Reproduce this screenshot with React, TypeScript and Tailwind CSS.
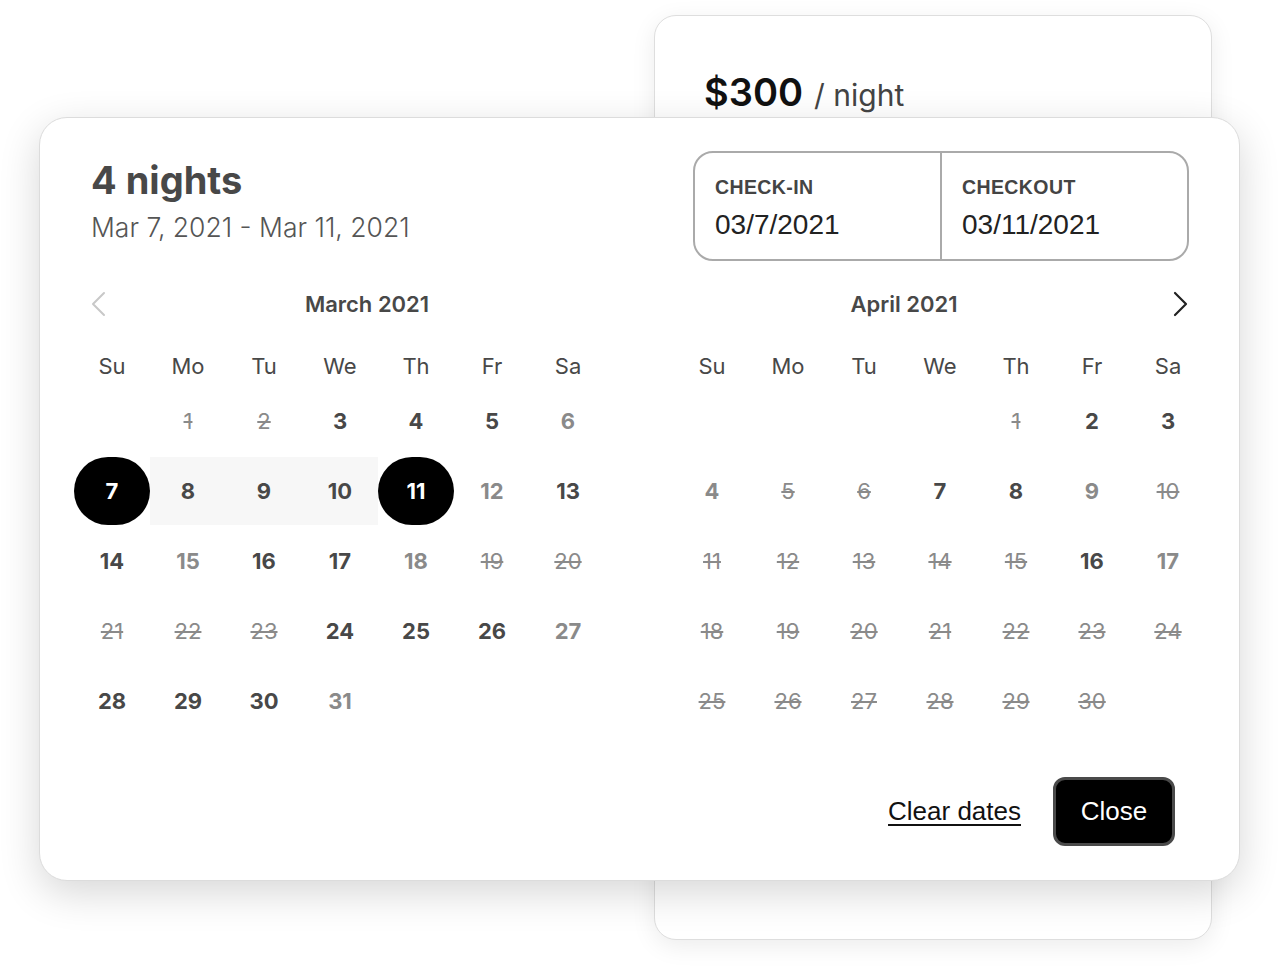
import React from 'react'

type DayState = 'open' | 'muted' | 'struck' | 'start' | 'end' | 'range'
type Day = { n: number; s: DayState } | null

const weekdays = ['Su', 'Mo', 'Tu', 'We', 'Th', 'Fr', 'Sa']

const o = (n: number): Day => ({ n, s: 'open' })
const m = (n: number): Day => ({ n, s: 'muted' })
const x = (n: number): Day => ({ n, s: 'struck' })

const march: Day[] = [
  null, x(1), x(2), o(3), o(4), o(5), m(6),
  { n: 7, s: 'start' }, { n: 8, s: 'range' }, { n: 9, s: 'range' }, { n: 10, s: 'range' }, { n: 11, s: 'end' }, m(12), o(13),
  o(14), m(15), o(16), o(17), m(18), x(19), x(20),
  x(21), x(22), x(23), o(24), o(25), o(26), m(27),
  o(28), o(29), o(30), m(31), null, null, null,
]

const april: Day[] = [
  null, null, null, null, x(1), o(2), o(3),
  m(4), x(5), x(6), o(7), o(8), m(9), x(10),
  x(11), x(12), x(13), x(14), x(15), o(16), m(17),
  x(18), x(19), x(20), x(21), x(22), x(23), x(24),
  x(25), x(26), x(27), x(28), x(29), x(30), null,
]

const DayCell = ({ day }: { day: Day }) => {
  if (!day) return <div className="h-[70px]" />
  const { n, s } = day
  if (s === 'start' || s === 'end') {
    return (
      <div className="flex h-[70px] items-center justify-center">
        <div className="flex h-[68px] w-[76px] items-center justify-center rounded-full bg-black text-[22px] font-bold text-white">
          {n}
        </div>
      </div>
    )
  }
  if (s === 'range') {
    return (
      <div className="flex h-[70px] items-center">
        <div className="flex h-[68px] w-full items-center justify-center bg-[#f7f7f7] text-[22px] font-bold text-[#484848]">
          {n}
        </div>
      </div>
    )
  }
  if (s === 'struck') {
    return (
      <div className="flex h-[70px] items-center justify-center text-[22px] font-normal text-[#8a8a8a] line-through">
        {n}
      </div>
    )
  }
  return (
    <div
      className={
        s === 'open'
          ? 'flex h-[70px] items-center justify-center text-[22px] font-bold text-[#484848]'
          : 'flex h-[70px] items-center justify-center text-[22px] font-bold text-[#8a8a8a]'
      }
    >
      {n}
    </div>
  )
}

const ChevronLeft = () => (
  <svg width="16" height="26" viewBox="0 0 16 26" fill="none">
    <path d="M14 2 L3 13 L14 24" stroke="#c8c8c8" strokeWidth="2" strokeLinecap="round" strokeLinejoin="round" />
  </svg>
)

const ChevronRight = () => (
  <svg width="16" height="26" viewBox="0 0 16 26" fill="none">
    <path d="M2 2 L13 13 L2 24" stroke="#222" strokeWidth="2.2" strokeLinecap="round" strokeLinejoin="round" />
  </svg>
)

const Month = ({ title, days, side }: { title: string; days: Day[]; side: 'left' | 'right' }) => (
  <div className="w-[532px]">
    <div className="flex h-[44px] items-center">
      {side === 'left' && (
        <div className="flex w-[54px] pl-[16px]">
          <ChevronLeft />
        </div>
      )}
      <div className="flex-1 text-center text-[22px] font-semibold text-[#484848]">{title}</div>
      {side === 'right' && (
        <div className="flex w-[72px] pl-[39px]">
          <ChevronRight />
        </div>
      )}
    </div>
    <div className="mt-[20px] grid h-[40px] grid-cols-7 items-center text-center text-[22px] font-normal text-[#484848]">
      {weekdays.map((w) => (
        <div key={w}>{w}</div>
      ))}
    </div>
    <div className="grid grid-cols-7">
      {days.map((d, i) => (
        <DayCell key={i} day={d} />
      ))}
    </div>
  </div>
)

export default function App() {
  return (
    <div className="relative h-[976px] w-[1278px] overflow-hidden bg-white font-['Inter',sans-serif]">
      {/* booking card behind */}
      <div className="absolute left-[654px] top-[15px] h-[925px] w-[558px] rounded-[22px] border border-[#dedede] bg-white px-[49px] pt-[48px] shadow-[0_6px_24px_rgba(0,0,0,0.08)]">
        <div className="flex items-baseline gap-[11px]">
          <span className="text-[38px] font-semibold text-[#111]">$300</span>
          <span className="text-[30px] font-normal text-[#444]">/ night</span>
        </div>
      </div>

      {/* date picker popover */}
      <div className="absolute left-[39px] top-[117px] w-[1201px] rounded-[28px] border border-[#dcdcdc] bg-white pb-[34px] pl-[34px] pr-[33px] pt-[33px] shadow-[0_12px_40px_rgba(0,0,0,0.16)]">
        <div className="flex justify-between pl-[17px] pr-[17px]">
          <div className="pt-[6px]">
            <h2 className="text-[38px] font-bold leading-[46px] text-[#484848]">4 nights</h2>
            <p className="mt-[6px] text-[26.5px] font-light leading-[36px] text-[#555]">Mar 7, 2021 - Mar 11, 2021</p>
          </div>
          <div className="flex h-[110px] w-[496px] rounded-[20px] border-2 border-[#aaa] font-['Liberation_Sans',sans-serif]">
            <div className="flex-1 border-r-2 border-[#aaa] pl-[20px] pt-[23px]">
              <div className="text-[19.5px] font-bold leading-[22px] tracking-[0.4px] text-[#444]">CHECK-IN</div>
              <div className="mt-[11px] text-[28px] leading-[32px] text-[#222]">03/7/2021</div>
            </div>
            <div className="flex-1 pl-[20px] pt-[23px]">
              <div className="text-[19.5px] font-bold leading-[22px] tracking-[0.4px] text-[#444]">CHECKOUT</div>
              <div className="mt-[11px] text-[28px] leading-[32px] text-[#222]">03/11/2021</div>
            </div>
          </div>
        </div>

        <div className="mt-[21px] flex justify-between">
          <Month title="March 2021" days={march} side="left" />
          <Month title="April 2021" days={april} side="right" />
        </div>

        <div className="mt-[41px] flex items-center justify-end gap-[32px] pr-[31px] font-['Liberation_Sans',sans-serif]">
          <button className="text-[26px] text-[#111] underline underline-offset-[4px]">Clear dates</button>
          <button className="h-[69px] w-[122px] rounded-[12px] border-[3px] border-[#4a4a4a] bg-black text-[26px] text-white">
            Close
          </button>
        </div>
      </div>
    </div>
  )
}
